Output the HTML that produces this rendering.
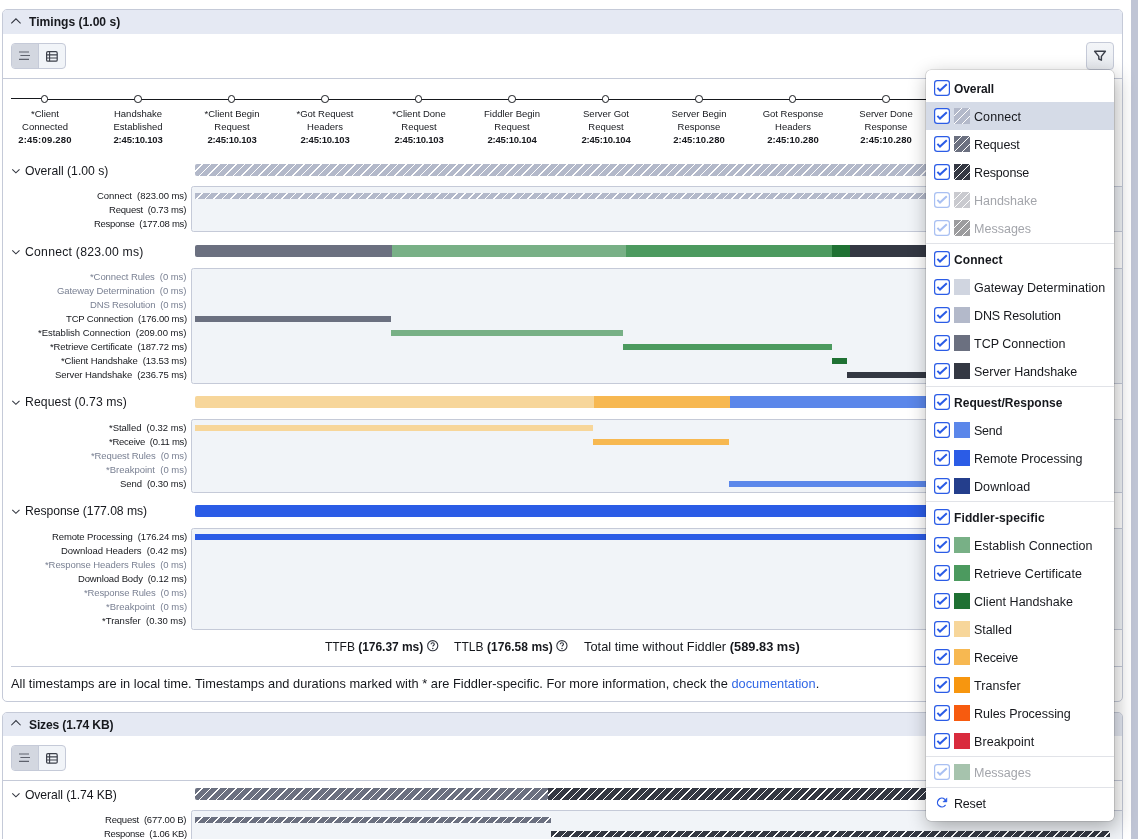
<!DOCTYPE html><html><head><meta charset="utf-8"><style>
html,body{margin:0;padding:0;}
body{width:1138px;height:839px;overflow:hidden;position:relative;background:#fff;font-family:"Liberation Sans", sans-serif;}
.t{position:absolute;white-space:nowrap;will-change:transform;}
.r{position:absolute;}
</style></head><body>
<div class="r" style="left:2px;top:9px;width:1119px;height:691px;border:1px solid #c5cad8;border-radius:5px;background:#fff;overflow:hidden"><div style="position:absolute;left:0;top:0;right:0;height:23.5px;background:#e5e9f3"></div></div>
<div class="t" style="left:28.8px;top:15.96px;font-size:12.1px;line-height:12.1px;font-weight:bold;color:#16181d;letter-spacing:0.001px;">Timings (1.00 s)</div>
<div class="r" style="left:11px;top:43px;width:53px;height:24px;border:1px solid #c5cad8;border-radius:4px;background:#f1f4f8;overflow:hidden"><div style="position:absolute;left:0;top:0;width:26px;height:24px;background:#d3d7e0;border-right:1px solid #c5cad8"></div></div>
<svg class="r" style="left:17px;top:49px" width="16" height="14" viewBox="0 0 16 14"><path d="M2 3H12 M3.4 6.5H13 M2 10.3H12" stroke="#5e626d" stroke-width="1.2" fill="none"/></svg>
<svg class="r" style="left:45px;top:49.6px" width="14" height="13" viewBox="0 0 14 13"><rect x="1.6" y="1.6" width="10.6" height="9.6" rx="1.3" fill="none" stroke="#3c404a" stroke-width="1.2"/><path d="M1.6 4.9H12.2 M1.6 8H12.2 M4.6 1.6V11.2" stroke="#3c404a" stroke-width="1.1" fill="none"/></svg>
<div class="r" style="left:1086.2px;top:42.1px;width:25.6px;height:25.6px;border:1px solid #c5cad8;border-radius:4px;background:linear-gradient(#f3f5f8,#e8ebf0)"></div>
<svg class="r" style="left:1092px;top:48px" width="16" height="15" viewBox="0 0 16 15"><path d="M2.6 3.2H13.4L9.4 8.4V12.2L6.8 11V8.4Z" fill="none" stroke="#3c404a" stroke-width="1.4" stroke-linejoin="round"/></svg>
<div class="r" style="left:3px;top:78px;width:1119px;height:1px;background:#c5cad8"></div>
<div class="r" style="left:11px;top:97.9px;width:33px;height:1.1px;background:#16181d"></div>
<div class="r" style="left:44px;top:98.8px;width:1070px;height:1.05px;background:#16181d"></div>
<div class="r" style="left:40.75px;top:95.25px;width:5.5px;height:5.5px;border:1px solid #16181d;border-radius:50%;background:#fff"></div>
<div class="t" style="left:-105.5px;width:300px;text-align:center;top:108.76px;font-size:9.5px;line-height:9.5px;font-weight:normal;color:#16181d;">*Client</div>
<div class="t" style="left:-105.5px;width:300px;text-align:center;top:121.76px;font-size:9.5px;line-height:9.5px;font-weight:normal;color:#16181d;">Connected</div>
<div class="t" style="left:-105.5px;width:300px;text-align:center;top:135.06px;font-size:9.5px;line-height:9.5px;font-weight:bold;color:#16181d;letter-spacing:0.206px;">2:45:09.280</div>
<div class="r" style="left:134.25px;top:95.25px;width:5.5px;height:5.5px;border:1px solid #16181d;border-radius:50%;background:#fff"></div>
<div class="t" style="left:-12.0px;width:300px;text-align:center;top:108.76px;font-size:9.5px;line-height:9.5px;font-weight:normal;color:#16181d;">Handshake</div>
<div class="t" style="left:-12.0px;width:300px;text-align:center;top:121.76px;font-size:9.5px;line-height:9.5px;font-weight:normal;color:#16181d;">Established</div>
<div class="t" style="left:-12.0px;width:300px;text-align:center;top:135.06px;font-size:9.5px;line-height:9.5px;font-weight:bold;color:#16181d;letter-spacing:-0.212px;">2:45:10.103</div>
<div class="r" style="left:227.75px;top:95.25px;width:5.5px;height:5.5px;border:1px solid #16181d;border-radius:50%;background:#fff"></div>
<div class="t" style="left:81.5px;width:300px;text-align:center;top:108.76px;font-size:9.5px;line-height:9.5px;font-weight:normal;color:#16181d;">*Client Begin</div>
<div class="t" style="left:81.5px;width:300px;text-align:center;top:121.76px;font-size:9.5px;line-height:9.5px;font-weight:normal;color:#16181d;">Request</div>
<div class="t" style="left:81.5px;width:300px;text-align:center;top:135.06px;font-size:9.5px;line-height:9.5px;font-weight:bold;color:#16181d;letter-spacing:-0.212px;">2:45:10.103</div>
<div class="r" style="left:321.25px;top:95.25px;width:5.5px;height:5.5px;border:1px solid #16181d;border-radius:50%;background:#fff"></div>
<div class="t" style="left:175.0px;width:300px;text-align:center;top:108.76px;font-size:9.5px;line-height:9.5px;font-weight:normal;color:#16181d;">*Got Request</div>
<div class="t" style="left:175.0px;width:300px;text-align:center;top:121.76px;font-size:9.5px;line-height:9.5px;font-weight:normal;color:#16181d;">Headers</div>
<div class="t" style="left:175.0px;width:300px;text-align:center;top:135.06px;font-size:9.5px;line-height:9.5px;font-weight:bold;color:#16181d;letter-spacing:-0.212px;">2:45:10.103</div>
<div class="r" style="left:414.75px;top:95.25px;width:5.5px;height:5.5px;border:1px solid #16181d;border-radius:50%;background:#fff"></div>
<div class="t" style="left:268.5px;width:300px;text-align:center;top:108.76px;font-size:9.5px;line-height:9.5px;font-weight:normal;color:#16181d;">*Client Done</div>
<div class="t" style="left:268.5px;width:300px;text-align:center;top:121.76px;font-size:9.5px;line-height:9.5px;font-weight:normal;color:#16181d;">Request</div>
<div class="t" style="left:268.5px;width:300px;text-align:center;top:135.06px;font-size:9.5px;line-height:9.5px;font-weight:bold;color:#16181d;letter-spacing:-0.212px;">2:45:10.103</div>
<div class="r" style="left:508.25px;top:95.25px;width:5.5px;height:5.5px;border:1px solid #16181d;border-radius:50%;background:#fff"></div>
<div class="t" style="left:362.0px;width:300px;text-align:center;top:108.76px;font-size:9.5px;line-height:9.5px;font-weight:normal;color:#16181d;">Fiddler Begin</div>
<div class="t" style="left:362.0px;width:300px;text-align:center;top:121.76px;font-size:9.5px;line-height:9.5px;font-weight:normal;color:#16181d;">Request</div>
<div class="t" style="left:362.0px;width:300px;text-align:center;top:135.06px;font-size:9.5px;line-height:9.5px;font-weight:bold;color:#16181d;letter-spacing:-0.203px;">2:45:10.104</div>
<div class="r" style="left:601.75px;top:95.25px;width:5.5px;height:5.5px;border:1px solid #16181d;border-radius:50%;background:#fff"></div>
<div class="t" style="left:455.5px;width:300px;text-align:center;top:108.76px;font-size:9.5px;line-height:9.5px;font-weight:normal;color:#16181d;">Server Got</div>
<div class="t" style="left:455.5px;width:300px;text-align:center;top:121.76px;font-size:9.5px;line-height:9.5px;font-weight:normal;color:#16181d;">Request</div>
<div class="t" style="left:455.5px;width:300px;text-align:center;top:135.06px;font-size:9.5px;line-height:9.5px;font-weight:bold;color:#16181d;letter-spacing:-0.203px;">2:45:10.104</div>
<div class="r" style="left:695.25px;top:95.25px;width:5.5px;height:5.5px;border:1px solid #16181d;border-radius:50%;background:#fff"></div>
<div class="t" style="left:549.0px;width:300px;text-align:center;top:108.76px;font-size:9.5px;line-height:9.5px;font-weight:normal;color:#16181d;">Server Begin</div>
<div class="t" style="left:549.0px;width:300px;text-align:center;top:121.76px;font-size:9.5px;line-height:9.5px;font-weight:normal;color:#16181d;">Response</div>
<div class="t" style="left:549.0px;width:300px;text-align:center;top:135.06px;font-size:9.5px;line-height:9.5px;font-weight:bold;color:#16181d;letter-spacing:0.033px;">2:45:10.280</div>
<div class="r" style="left:788.75px;top:95.25px;width:5.5px;height:5.5px;border:1px solid #16181d;border-radius:50%;background:#fff"></div>
<div class="t" style="left:642.5px;width:300px;text-align:center;top:108.76px;font-size:9.5px;line-height:9.5px;font-weight:normal;color:#16181d;">Got Response</div>
<div class="t" style="left:642.5px;width:300px;text-align:center;top:121.76px;font-size:9.5px;line-height:9.5px;font-weight:normal;color:#16181d;">Headers</div>
<div class="t" style="left:642.5px;width:300px;text-align:center;top:135.06px;font-size:9.5px;line-height:9.5px;font-weight:bold;color:#16181d;letter-spacing:0.033px;">2:45:10.280</div>
<div class="r" style="left:882.25px;top:95.25px;width:5.5px;height:5.5px;border:1px solid #16181d;border-radius:50%;background:#fff"></div>
<div class="t" style="left:736.0px;width:300px;text-align:center;top:108.76px;font-size:9.5px;line-height:9.5px;font-weight:normal;color:#16181d;">Server Done</div>
<div class="t" style="left:736.0px;width:300px;text-align:center;top:121.76px;font-size:9.5px;line-height:9.5px;font-weight:normal;color:#16181d;">Response</div>
<div class="t" style="left:736.0px;width:300px;text-align:center;top:135.06px;font-size:9.5px;line-height:9.5px;font-weight:bold;color:#16181d;letter-spacing:0.033px;">2:45:10.280</div>
<div class="r" style="left:975.75px;top:95.25px;width:5.5px;height:5.5px;border:1px solid #16181d;border-radius:50%;background:#fff"></div>
<div class="t" style="left:829.5px;width:300px;text-align:center;top:108.76px;font-size:9.5px;line-height:9.5px;font-weight:normal;color:#16181d;">Client Done</div>
<div class="t" style="left:829.5px;width:300px;text-align:center;top:121.76px;font-size:9.5px;line-height:9.5px;font-weight:normal;color:#16181d;">Response</div>
<div class="t" style="left:829.5px;width:300px;text-align:center;top:135.06px;font-size:9.5px;line-height:9.5px;font-weight:bold;color:#16181d;letter-spacing:0.033px;">2:45:10.280</div>
<div class="r" style="left:1069.25px;top:95.25px;width:5.5px;height:5.5px;border:1px solid #16181d;border-radius:50%;background:#fff"></div>
<div class="t" style="left:923.0px;width:300px;text-align:center;top:108.76px;font-size:9.5px;line-height:9.5px;font-weight:normal;color:#16181d;">Client</div>
<div class="t" style="left:923.0px;width:300px;text-align:center;top:121.76px;font-size:9.5px;line-height:9.5px;font-weight:normal;color:#16181d;">Disconnected</div>
<div class="t" style="left:923.0px;width:300px;text-align:center;top:135.06px;font-size:9.5px;line-height:9.5px;font-weight:bold;color:#16181d;letter-spacing:0.033px;">2:45:10.280</div>
<div class="t" style="left:25px;top:165.27px;font-size:12.2px;line-height:12.2px;font-weight:normal;color:#16181d;letter-spacing:0.005px;">Overall (1.00 s)</div>
<div class="r" style="left:195px;top:164px;width:915px;height:12px;border-radius:2px;background:repeating-linear-gradient(135deg,#b3b9ca 0 4.9px,#fff 4.9px 6px);"></div>
<div class="r" style="left:191px;top:186px;width:930px;height:44px;border:1px solid #c5cad8;border-radius:2.5px 0 0 2.5px;background:#f1f4f8"></div>
<div class="t" style="right:951.4px;text-align:right;top:191.16px;font-size:9.5px;line-height:9.5px;font-weight:normal;color:#16181d;letter-spacing:-0.063px;">Connect&nbsp;&nbsp;(823.00 ms)</div>
<div class="t" style="right:951.4px;text-align:right;top:205.16px;font-size:9.5px;line-height:9.5px;font-weight:normal;color:#16181d;letter-spacing:-0.200px;">Request&nbsp;&nbsp;(0.73 ms)</div>
<div class="t" style="right:951.4px;text-align:right;top:219.16px;font-size:9.5px;line-height:9.5px;font-weight:normal;color:#16181d;letter-spacing:-0.279px;">Response&nbsp;&nbsp;(177.08 ms)</div>
<div class="r" style="left:195px;top:193px;width:915px;height:6px;background:repeating-linear-gradient(135deg,#b3b9ca 0 4.9px,#fff 4.9px 6px);"></div>
<div class="t" style="left:25px;top:245.87px;font-size:12.2px;line-height:12.2px;font-weight:normal;color:#16181d;letter-spacing:0.257px;">Connect (823.00 ms)</div>
<div class="r" style="left:195px;top:245px;width:197px;height:12px;background:#6b7080;border-radius:2px 0 0 2px"></div>
<div class="r" style="left:392px;top:245px;width:234px;height:12px;background:#78b086;"></div>
<div class="r" style="left:626px;top:245px;width:206px;height:12px;background:#4c9a5f;"></div>
<div class="r" style="left:832px;top:245px;width:18px;height:12px;background:#1f7133;"></div>
<div class="r" style="left:850px;top:245px;width:260px;height:12px;background:#343843;"></div>
<div class="r" style="left:191px;top:268px;width:930px;height:114px;border:1px solid #c5cad8;border-radius:2.5px 0 0 2.5px;background:#f1f4f8"></div>
<div class="t" style="right:951.4px;text-align:right;top:272.16px;font-size:9.5px;line-height:9.5px;font-weight:normal;color:#7a8193;letter-spacing:-0.091px;">*Connect Rules&nbsp;&nbsp;(0 ms)</div>
<div class="t" style="right:951.4px;text-align:right;top:286.16px;font-size:9.5px;line-height:9.5px;font-weight:normal;color:#7a8193;letter-spacing:-0.075px;">Gateway Determination&nbsp;&nbsp;(0 ms)</div>
<div class="t" style="right:951.4px;text-align:right;top:300.16px;font-size:9.5px;line-height:9.5px;font-weight:normal;color:#7a8193;letter-spacing:-0.163px;">DNS Resolution&nbsp;&nbsp;(0 ms)</div>
<div class="t" style="right:951.4px;text-align:right;top:314.16px;font-size:9.5px;line-height:9.5px;font-weight:normal;color:#16181d;letter-spacing:-0.170px;">TCP Connection&nbsp;&nbsp;(176.00 ms)</div>
<div class="t" style="right:951.4px;text-align:right;top:328.16px;font-size:9.5px;line-height:9.5px;font-weight:normal;color:#16181d;letter-spacing:-0.018px;">*Establish Connection&nbsp;&nbsp;(209.00 ms)</div>
<div class="t" style="right:951.4px;text-align:right;top:342.16px;font-size:9.5px;line-height:9.5px;font-weight:normal;color:#16181d;letter-spacing:-0.102px;">*Retrieve Certificate&nbsp;&nbsp;(187.72 ms)</div>
<div class="t" style="right:951.4px;text-align:right;top:356.16px;font-size:9.5px;line-height:9.5px;font-weight:normal;color:#16181d;letter-spacing:-0.123px;">*Client Handshake&nbsp;&nbsp;(13.53 ms)</div>
<div class="t" style="right:951.4px;text-align:right;top:370.16px;font-size:9.5px;line-height:9.5px;font-weight:normal;color:#16181d;letter-spacing:-0.098px;">Server Handshake&nbsp;&nbsp;(236.75 ms)</div>
<div class="r" style="left:195px;top:316px;width:196px;height:6px;background:#6b7080"></div>
<div class="r" style="left:391px;top:330px;width:232px;height:6px;background:#78b086"></div>
<div class="r" style="left:623px;top:344px;width:209px;height:6px;background:#4c9a5f"></div>
<div class="r" style="left:832px;top:358px;width:15px;height:6px;background:#1f7133"></div>
<div class="r" style="left:847px;top:372px;width:263px;height:6px;background:#343843"></div>
<div class="t" style="left:25px;top:396.27px;font-size:12.2px;line-height:12.2px;font-weight:normal;color:#16181d;letter-spacing:0.097px;">Request (0.73 ms)</div>
<div class="r" style="left:195px;top:396px;width:399px;height:12px;background:#f7d69a;border-radius:2px 0 0 2px"></div>
<div class="r" style="left:594px;top:396px;width:136px;height:12px;background:#f7b851;"></div>
<div class="r" style="left:730px;top:396px;width:380px;height:12px;background:#5b87ea;"></div>
<div class="r" style="left:191px;top:418.5px;width:930px;height:72px;border:1px solid #c5cad8;border-radius:2.5px 0 0 2.5px;background:#f1f4f8"></div>
<div class="t" style="right:951.4px;text-align:right;top:423.16px;font-size:9.5px;line-height:9.5px;font-weight:normal;color:#16181d;letter-spacing:-0.040px;">*Stalled&nbsp;&nbsp;(0.32 ms)</div>
<div class="t" style="right:951.4px;text-align:right;top:437.16px;font-size:9.5px;line-height:9.5px;font-weight:normal;color:#16181d;letter-spacing:-0.248px;">*Receive&nbsp;&nbsp;(0.11 ms)</div>
<div class="t" style="right:951.4px;text-align:right;top:451.16px;font-size:9.5px;line-height:9.5px;font-weight:normal;color:#7a8193;letter-spacing:-0.100px;">*Request Rules&nbsp;&nbsp;(0 ms)</div>
<div class="t" style="right:951.4px;text-align:right;top:465.16px;font-size:9.5px;line-height:9.5px;font-weight:normal;color:#7a8193;letter-spacing:-0.011px;">*Breakpoint&nbsp;&nbsp;(0 ms)</div>
<div class="t" style="right:951.4px;text-align:right;top:479.16px;font-size:9.5px;line-height:9.5px;font-weight:normal;color:#16181d;letter-spacing:-0.086px;">Send&nbsp;&nbsp;(0.30 ms)</div>
<div class="r" style="left:195px;top:425px;width:398px;height:6px;background:#f7d69a"></div>
<div class="r" style="left:593px;top:439px;width:136px;height:6px;background:#f7b851"></div>
<div class="r" style="left:729px;top:481px;width:381px;height:6px;background:#5b87ea"></div>
<div class="t" style="left:25px;top:505.27px;font-size:12.2px;line-height:12.2px;font-weight:normal;color:#16181d;letter-spacing:-0.065px;">Response (177.08 ms)</div>
<div class="r" style="left:195px;top:505px;width:915px;height:12px;background:#2b5ce6;border-radius:2px"></div>
<div class="r" style="left:191px;top:527.5px;width:930px;height:100px;border:1px solid #c5cad8;border-radius:2.5px 0 0 2.5px;background:#f1f4f8"></div>
<div class="t" style="right:951.4px;text-align:right;top:532.16px;font-size:9.5px;line-height:9.5px;font-weight:normal;color:#16181d;letter-spacing:-0.126px;">Remote Processing&nbsp;&nbsp;(176.24 ms)</div>
<div class="t" style="right:951.4px;text-align:right;top:546.16px;font-size:9.5px;line-height:9.5px;font-weight:normal;color:#16181d;letter-spacing:-0.015px;">Download Headers&nbsp;&nbsp;(0.42 ms)</div>
<div class="t" style="right:951.4px;text-align:right;top:560.16px;font-size:9.5px;line-height:9.5px;font-weight:normal;color:#7a8193;letter-spacing:-0.082px;">*Response Headers Rules&nbsp;&nbsp;(0 ms)</div>
<div class="t" style="right:951.4px;text-align:right;top:574.16px;font-size:9.5px;line-height:9.5px;font-weight:normal;color:#16181d;letter-spacing:-0.136px;">Download Body&nbsp;&nbsp;(0.12 ms)</div>
<div class="t" style="right:951.4px;text-align:right;top:588.16px;font-size:9.5px;line-height:9.5px;font-weight:normal;color:#7a8193;letter-spacing:-0.122px;">*Response Rules&nbsp;&nbsp;(0 ms)</div>
<div class="t" style="right:951.4px;text-align:right;top:602.16px;font-size:9.5px;line-height:9.5px;font-weight:normal;color:#7a8193;letter-spacing:-0.011px;">*Breakpoint&nbsp;&nbsp;(0 ms)</div>
<div class="t" style="right:951.4px;text-align:right;top:616.16px;font-size:9.5px;line-height:9.5px;font-weight:normal;color:#16181d;letter-spacing:0.004px;">*Transfer&nbsp;&nbsp;(0.30 ms)</div>
<div class="r" style="left:195px;top:534px;width:915px;height:6px;background:#2b5ce6"></div>
<div class="t" style="left:325.3px;top:641.44px;font-size:12px;line-height:12px;font-weight:normal;color:#16181d;letter-spacing:-0.031px;">TTFB <b>(176.37 ms)</b></div>
<div class="t" style="left:454.4px;top:641.44px;font-size:12px;line-height:12px;font-weight:normal;color:#16181d;letter-spacing:0.053px;">TTLB <b>(176.58 ms)</b></div>
<div class="t" style="left:583.5px;top:640.76px;font-size:12.8px;line-height:12.8px;font-weight:normal;color:#16181d;letter-spacing:0.023px;">Total time without Fiddler <b>(589.83 ms)</b></div>
<div class="r" style="left:11px;top:666px;width:1112px;height:1px;background:#c5cad8"></div>
<div class="t" style="left:11.4px;top:677.56px;font-size:12.8px;line-height:12.8px;font-weight:normal;color:#16181d;letter-spacing:0.022px;">All timestamps are in local time. Timestamps and durations marked with * are Fiddler-specific. For more information, check the <span style="color:#3268e6">documentation</span>.</div>
<div class="r" style="left:2px;top:712px;width:1119px;height:286px;border:1px solid #c5cad8;border-radius:5px;background:#fff;overflow:hidden"><div style="position:absolute;left:0;top:0;right:0;height:22.8px;background:#e5e9f3"></div></div>
<div class="t" style="left:28.8px;top:718.96px;font-size:12.1px;line-height:12.1px;font-weight:bold;color:#16181d;letter-spacing:-0.155px;">Sizes (1.74 KB)</div>
<div class="r" style="left:11px;top:745px;width:53px;height:24px;border:1px solid #c5cad8;border-radius:4px;background:#f1f4f8;overflow:hidden"><div style="position:absolute;left:0;top:0;width:26px;height:24px;background:#d3d7e0;border-right:1px solid #c5cad8"></div></div>
<svg class="r" style="left:17px;top:751px" width="16" height="14" viewBox="0 0 16 14"><path d="M2 3H12 M3.4 6.5H13 M2 10.3H12" stroke="#5e626d" stroke-width="1.2" fill="none"/></svg>
<svg class="r" style="left:45px;top:751.6px" width="14" height="13" viewBox="0 0 14 13"><rect x="1.6" y="1.6" width="10.6" height="9.6" rx="1.3" fill="none" stroke="#3c404a" stroke-width="1.2"/><path d="M1.6 4.9H12.2 M1.6 8H12.2 M4.6 1.6V11.2" stroke="#3c404a" stroke-width="1.1" fill="none"/></svg>
<div class="r" style="left:3px;top:780px;width:1119px;height:1px;background:#c5cad8"></div>
<div class="t" style="left:25px;top:789.07px;font-size:12.2px;line-height:12.2px;font-weight:normal;color:#16181d;letter-spacing:-0.105px;">Overall (1.74 KB)</div>
<div class="r" style="left:195px;top:788px;width:353px;height:12px;border-radius:2px 0 0 2px;background:repeating-linear-gradient(135deg,#6b7080 0 4.9px,#fff 4.9px 6px);"></div>
<div class="r" style="left:548px;top:788px;width:562px;height:12px;background:repeating-linear-gradient(135deg,#343843 0 4.9px,#fff 4.9px 6px);"></div>
<div class="r" style="left:191px;top:810px;width:930px;height:44px;border:1px solid #c5cad8;border-radius:2.5px 0 0 2.5px;background:#f1f4f8"></div>
<div class="t" style="right:951.4px;text-align:right;top:815.16px;font-size:9.5px;line-height:9.5px;font-weight:normal;color:#16181d;letter-spacing:-0.196px;">Request&nbsp;&nbsp;(677.00 B)</div>
<div class="t" style="right:951.4px;text-align:right;top:829.16px;font-size:9.5px;line-height:9.5px;font-weight:normal;color:#16181d;letter-spacing:-0.273px;">Response&nbsp;&nbsp;(1.06 KB)</div>
<div class="r" style="left:195px;top:817px;width:356px;height:6px;background:repeating-linear-gradient(135deg,#6b7080 0 4.9px,#fff 4.9px 6px);"></div>
<div class="r" style="left:551px;top:831px;width:559px;height:6px;background:repeating-linear-gradient(135deg,#343843 0 4.9px,#fff 4.9px 6px);"></div>
<div class="r" style="left:1131px;top:0px;width:7px;height:839px;background:#c0c5d5"></div>
<svg class="r" style="left:0;top:0" width="1138" height="839" viewBox="0 0 1138 839"><path d="M11.3 23.45 L15.95 18.8 L20.6 23.45" fill="none" stroke="#30343e" stroke-width="1.05"/><path d="M12.3 169.4 L15.9 172.8 L19.5 169.4" fill="none" stroke="#30343e" stroke-width="1.05"/><path d="M12.3 250.4 L15.9 253.8 L19.5 250.4" fill="none" stroke="#30343e" stroke-width="1.05"/><path d="M12.3 400.9 L15.9 404.29999999999995 L19.5 400.9" fill="none" stroke="#30343e" stroke-width="1.05"/><path d="M12.3 509.9 L15.9 513.3 L19.5 509.9" fill="none" stroke="#30343e" stroke-width="1.05"/><g transform="translate(426.7 639.7)"><circle cx="6" cy="6" r="5.1" fill="none" stroke="#30343e" stroke-width="1.1"/><path d="M4.4 4.6C4.4 3.7 5.1 3.1 6 3.1C6.9 3.1 7.6 3.7 7.6 4.5C7.6 5.5 6.2 5.6 6.2 6.8" fill="none" stroke="#30343e" stroke-width="1.1"/><circle cx="6.1" cy="8.7" r="0.75" fill="#30343e"/></g><g transform="translate(555.9 639.7)"><circle cx="6" cy="6" r="5.1" fill="none" stroke="#30343e" stroke-width="1.1"/><path d="M4.4 4.6C4.4 3.7 5.1 3.1 6 3.1C6.9 3.1 7.6 3.7 7.6 4.5C7.6 5.5 6.2 5.6 6.2 6.8" fill="none" stroke="#30343e" stroke-width="1.1"/><circle cx="6.1" cy="8.7" r="0.75" fill="#30343e"/></g><path d="M11.3 725.25 L15.95 720.5999999999999 L20.6 725.25" fill="none" stroke="#30343e" stroke-width="1.05"/><path d="M12.3 793.4 L15.9 796.8 L19.5 793.4" fill="none" stroke="#30343e" stroke-width="1.05"/></svg>
<div class="r" style="left:926px;top:70px;width:188px;height:751px;background:#fff;border-radius:5px;box-shadow:2px 6px 20px rgba(0,0,0,0.32),0 0 0 0.6px rgba(0,0,0,0.2)"></div>
<div class="t" style="left:954px;top:82.84px;font-size:12px;line-height:12px;font-weight:bold;color:#16181d;letter-spacing:-0.100px;">Overall</div>
<div class="r" style="left:926px;top:102px;width:188px;height:28px;background:#d5dbe7"></div>
<div class="r" style="left:954px;top:108px;width:16px;height:16px;background:repeating-linear-gradient(135deg,#fff 0 0.65px,#b3b9ca 0.65px 5.007px,#fff 5.007px 5.657px);"></div>
<div class="t" style="left:974px;top:110.52px;font-size:12.5px;line-height:12.5px;font-weight:normal;color:#16181d;letter-spacing:0.077px;">Connect</div>
<div class="r" style="left:954px;top:136px;width:16px;height:16px;background:repeating-linear-gradient(135deg,#fff 0 0.65px,#6b7080 0.65px 5.007px,#fff 5.007px 5.657px);"></div>
<div class="t" style="left:974px;top:138.52px;font-size:12.5px;line-height:12.5px;font-weight:normal;color:#16181d;letter-spacing:-0.123px;">Request</div>
<div class="r" style="left:954px;top:164px;width:16px;height:16px;background:repeating-linear-gradient(135deg,#fff 0 0.65px,#343843 0.65px 5.007px,#fff 5.007px 5.657px);"></div>
<div class="t" style="left:974px;top:166.52px;font-size:12.5px;line-height:12.5px;font-weight:normal;color:#16181d;letter-spacing:-0.150px;">Response</div>
<div class="r" style="left:954px;top:192px;width:16px;height:16px;background:repeating-linear-gradient(135deg,#fff 0 0.65px,#c9cacf 0.65px 5.007px,#fff 5.007px 5.657px);"></div>
<div class="t" style="left:974px;top:194.52px;font-size:12.5px;line-height:12.5px;font-weight:normal;color:#a3a5ab;letter-spacing:-0.017px;">Handshake</div>
<div class="r" style="left:954px;top:220px;width:16px;height:16px;background:repeating-linear-gradient(135deg,#fff 0 0.65px,#9c9c9e 0.65px 5.007px,#fff 5.007px 5.657px);"></div>
<div class="t" style="left:974px;top:222.52px;font-size:12.5px;line-height:12.5px;font-weight:normal;color:#a3a5ab;letter-spacing:0.014px;">Messages</div>
<div class="r" style="left:926px;top:243px;width:188px;height:1px;background:#e1e3e8"></div>
<div class="t" style="left:954px;top:253.84px;font-size:12px;line-height:12px;font-weight:bold;color:#16181d;letter-spacing:0.086px;">Connect</div>
<div class="r" style="left:954px;top:279px;width:16px;height:16px;background:#d0d5e0"></div>
<div class="t" style="left:974px;top:281.52px;font-size:12.5px;line-height:12.5px;font-weight:normal;color:#16181d;letter-spacing:0.027px;">Gateway Determination</div>
<div class="r" style="left:954px;top:307px;width:16px;height:16px;background:#b3b9ca"></div>
<div class="t" style="left:974px;top:309.52px;font-size:12.5px;line-height:12.5px;font-weight:normal;color:#16181d;letter-spacing:-0.146px;">DNS Resolution</div>
<div class="r" style="left:954px;top:335px;width:16px;height:16px;background:#6b7080"></div>
<div class="t" style="left:974px;top:337.52px;font-size:12.5px;line-height:12.5px;font-weight:normal;color:#16181d;letter-spacing:-0.007px;">TCP Connection</div>
<div class="r" style="left:954px;top:363px;width:16px;height:16px;background:#343843"></div>
<div class="t" style="left:974px;top:365.52px;font-size:12.5px;line-height:12.5px;font-weight:normal;color:#16181d;letter-spacing:-0.021px;">Server Handshake</div>
<div class="r" style="left:926px;top:386px;width:188px;height:1px;background:#e1e3e8"></div>
<div class="t" style="left:954px;top:396.84px;font-size:12px;line-height:12px;font-weight:bold;color:#16181d;letter-spacing:0.023px;">Request/Response</div>
<div class="r" style="left:954px;top:422px;width:16px;height:16px;background:#5b87ea"></div>
<div class="t" style="left:974px;top:424.52px;font-size:12.5px;line-height:12.5px;font-weight:normal;color:#16181d;letter-spacing:-0.251px;">Send</div>
<div class="r" style="left:954px;top:450px;width:16px;height:16px;background:#2b5ce6"></div>
<div class="t" style="left:974px;top:452.52px;font-size:12.5px;line-height:12.5px;font-weight:normal;color:#16181d;letter-spacing:-0.040px;">Remote Processing</div>
<div class="r" style="left:954px;top:478px;width:16px;height:16px;background:#243e8c"></div>
<div class="t" style="left:974px;top:480.52px;font-size:12.5px;line-height:12.5px;font-weight:normal;color:#16181d;letter-spacing:0.076px;">Download</div>
<div class="r" style="left:926px;top:501px;width:188px;height:1px;background:#e1e3e8"></div>
<div class="t" style="left:954px;top:511.84px;font-size:12px;line-height:12px;font-weight:bold;color:#16181d;letter-spacing:0.126px;">Fiddler-specific</div>
<div class="r" style="left:954px;top:537px;width:16px;height:16px;background:#78b086"></div>
<div class="t" style="left:974px;top:539.52px;font-size:12.5px;line-height:12.5px;font-weight:normal;color:#16181d;letter-spacing:0.058px;">Establish Connection</div>
<div class="r" style="left:954px;top:565px;width:16px;height:16px;background:#4c9a5f"></div>
<div class="t" style="left:974px;top:567.52px;font-size:12.5px;line-height:12.5px;font-weight:normal;color:#16181d;letter-spacing:0.085px;">Retrieve Certificate</div>
<div class="r" style="left:954px;top:593px;width:16px;height:16px;background:#1f7133"></div>
<div class="t" style="left:974px;top:595.52px;font-size:12.5px;line-height:12.5px;font-weight:normal;color:#16181d;letter-spacing:0.021px;">Client Handshake</div>
<div class="r" style="left:954px;top:621px;width:16px;height:16px;background:#f7d69a"></div>
<div class="t" style="left:974px;top:623.52px;font-size:12.5px;line-height:12.5px;font-weight:normal;color:#16181d;letter-spacing:-0.062px;">Stalled</div>
<div class="r" style="left:954px;top:649px;width:16px;height:16px;background:#f7b851"></div>
<div class="t" style="left:974px;top:651.52px;font-size:12.5px;line-height:12.5px;font-weight:normal;color:#16181d;letter-spacing:-0.139px;">Receive</div>
<div class="r" style="left:954px;top:677px;width:16px;height:16px;background:#f7960f"></div>
<div class="t" style="left:974px;top:679.52px;font-size:12.5px;line-height:12.5px;font-weight:normal;color:#16181d;letter-spacing:0.090px;">Transfer</div>
<div class="r" style="left:954px;top:705px;width:16px;height:16px;background:#f75b0f"></div>
<div class="t" style="left:974px;top:707.52px;font-size:12.5px;line-height:12.5px;font-weight:normal;color:#16181d;letter-spacing:-0.035px;">Rules Processing</div>
<div class="r" style="left:954px;top:733px;width:16px;height:16px;background:#d92b3d"></div>
<div class="t" style="left:974px;top:735.52px;font-size:12.5px;line-height:12.5px;font-weight:normal;color:#16181d;letter-spacing:0.063px;">Breakpoint</div>
<div class="r" style="left:926px;top:756px;width:188px;height:1px;background:#e1e3e8"></div>
<div class="r" style="left:954px;top:764px;width:16px;height:16px;background:#a6c3ad"></div>
<div class="t" style="left:974px;top:766.52px;font-size:12.5px;line-height:12.5px;font-weight:normal;color:#a3a5ab;letter-spacing:0.002px;">Messages</div>
<div class="r" style="left:926px;top:787px;width:188px;height:1px;background:#e1e3e8"></div>
<div class="t" style="left:954px;top:797.52px;font-size:12.5px;line-height:12.5px;font-weight:normal;color:#16181d;letter-spacing:-0.191px;">Reset</div>
<svg class="r" style="left:0;top:0" width="1138" height="839" viewBox="0 0 1138 839"><rect x="934.6" y="80.6" width="14.8" height="14.8" rx="2.6" fill="#fff" stroke="#2b5ce6" stroke-width="1.2"/><path d="M937.4 87.9L940 90.6L946.8 84.2" fill="none" stroke="#2b5ce6" stroke-width="2"/><rect x="934.6" y="108.6" width="14.8" height="14.8" rx="2.6" fill="#fff" stroke="#2b5ce6" stroke-width="1.2"/><path d="M937.4 115.9L940 118.6L946.8 112.2" fill="none" stroke="#2b5ce6" stroke-width="2"/><rect x="934.6" y="136.6" width="14.8" height="14.8" rx="2.6" fill="#fff" stroke="#2b5ce6" stroke-width="1.2"/><path d="M937.4 143.9L940 146.6L946.8 140.2" fill="none" stroke="#2b5ce6" stroke-width="2"/><rect x="934.6" y="164.6" width="14.8" height="14.8" rx="2.6" fill="#fff" stroke="#2b5ce6" stroke-width="1.2"/><path d="M937.4 171.9L940 174.6L946.8 168.2" fill="none" stroke="#2b5ce6" stroke-width="2"/><rect x="934.6" y="192.6" width="14.8" height="14.8" rx="2.6" fill="#fff" stroke="#a9c0f2" stroke-width="1.2"/><path d="M937.4 199.9L940 202.6L946.8 196.2" fill="none" stroke="#a9c0f2" stroke-width="2"/><rect x="934.6" y="220.6" width="14.8" height="14.8" rx="2.6" fill="#fff" stroke="#a9c0f2" stroke-width="1.2"/><path d="M937.4 227.9L940 230.6L946.8 224.2" fill="none" stroke="#a9c0f2" stroke-width="2"/><rect x="934.6" y="251.6" width="14.8" height="14.8" rx="2.6" fill="#fff" stroke="#2b5ce6" stroke-width="1.2"/><path d="M937.4 258.9L940 261.6L946.8 255.2" fill="none" stroke="#2b5ce6" stroke-width="2"/><rect x="934.6" y="279.6" width="14.8" height="14.8" rx="2.6" fill="#fff" stroke="#2b5ce6" stroke-width="1.2"/><path d="M937.4 286.9L940 289.6L946.8 283.2" fill="none" stroke="#2b5ce6" stroke-width="2"/><rect x="934.6" y="307.6" width="14.8" height="14.8" rx="2.6" fill="#fff" stroke="#2b5ce6" stroke-width="1.2"/><path d="M937.4 314.9L940 317.6L946.8 311.2" fill="none" stroke="#2b5ce6" stroke-width="2"/><rect x="934.6" y="335.6" width="14.8" height="14.8" rx="2.6" fill="#fff" stroke="#2b5ce6" stroke-width="1.2"/><path d="M937.4 342.9L940 345.6L946.8 339.2" fill="none" stroke="#2b5ce6" stroke-width="2"/><rect x="934.6" y="363.6" width="14.8" height="14.8" rx="2.6" fill="#fff" stroke="#2b5ce6" stroke-width="1.2"/><path d="M937.4 370.9L940 373.6L946.8 367.2" fill="none" stroke="#2b5ce6" stroke-width="2"/><rect x="934.6" y="394.6" width="14.8" height="14.8" rx="2.6" fill="#fff" stroke="#2b5ce6" stroke-width="1.2"/><path d="M937.4 401.9L940 404.6L946.8 398.2" fill="none" stroke="#2b5ce6" stroke-width="2"/><rect x="934.6" y="422.6" width="14.8" height="14.8" rx="2.6" fill="#fff" stroke="#2b5ce6" stroke-width="1.2"/><path d="M937.4 429.9L940 432.6L946.8 426.2" fill="none" stroke="#2b5ce6" stroke-width="2"/><rect x="934.6" y="450.6" width="14.8" height="14.8" rx="2.6" fill="#fff" stroke="#2b5ce6" stroke-width="1.2"/><path d="M937.4 457.9L940 460.6L946.8 454.2" fill="none" stroke="#2b5ce6" stroke-width="2"/><rect x="934.6" y="478.6" width="14.8" height="14.8" rx="2.6" fill="#fff" stroke="#2b5ce6" stroke-width="1.2"/><path d="M937.4 485.9L940 488.6L946.8 482.2" fill="none" stroke="#2b5ce6" stroke-width="2"/><rect x="934.6" y="509.6" width="14.8" height="14.8" rx="2.6" fill="#fff" stroke="#2b5ce6" stroke-width="1.2"/><path d="M937.4 516.9L940 519.6L946.8 513.2" fill="none" stroke="#2b5ce6" stroke-width="2"/><rect x="934.6" y="537.6" width="14.8" height="14.8" rx="2.6" fill="#fff" stroke="#2b5ce6" stroke-width="1.2"/><path d="M937.4 544.9L940 547.6L946.8 541.2" fill="none" stroke="#2b5ce6" stroke-width="2"/><rect x="934.6" y="565.6" width="14.8" height="14.8" rx="2.6" fill="#fff" stroke="#2b5ce6" stroke-width="1.2"/><path d="M937.4 572.9L940 575.6L946.8 569.2" fill="none" stroke="#2b5ce6" stroke-width="2"/><rect x="934.6" y="593.6" width="14.8" height="14.8" rx="2.6" fill="#fff" stroke="#2b5ce6" stroke-width="1.2"/><path d="M937.4 600.9L940 603.6L946.8 597.2" fill="none" stroke="#2b5ce6" stroke-width="2"/><rect x="934.6" y="621.6" width="14.8" height="14.8" rx="2.6" fill="#fff" stroke="#2b5ce6" stroke-width="1.2"/><path d="M937.4 628.9L940 631.6L946.8 625.2" fill="none" stroke="#2b5ce6" stroke-width="2"/><rect x="934.6" y="649.6" width="14.8" height="14.8" rx="2.6" fill="#fff" stroke="#2b5ce6" stroke-width="1.2"/><path d="M937.4 656.9L940 659.6L946.8 653.2" fill="none" stroke="#2b5ce6" stroke-width="2"/><rect x="934.6" y="677.6" width="14.8" height="14.8" rx="2.6" fill="#fff" stroke="#2b5ce6" stroke-width="1.2"/><path d="M937.4 684.9L940 687.6L946.8 681.2" fill="none" stroke="#2b5ce6" stroke-width="2"/><rect x="934.6" y="705.6" width="14.8" height="14.8" rx="2.6" fill="#fff" stroke="#2b5ce6" stroke-width="1.2"/><path d="M937.4 712.9L940 715.6L946.8 709.2" fill="none" stroke="#2b5ce6" stroke-width="2"/><rect x="934.6" y="733.6" width="14.8" height="14.8" rx="2.6" fill="#fff" stroke="#2b5ce6" stroke-width="1.2"/><path d="M937.4 740.9L940 743.6L946.8 737.2" fill="none" stroke="#2b5ce6" stroke-width="2"/><rect x="934.6" y="764.6" width="14.8" height="14.8" rx="2.6" fill="#fff" stroke="#a9c0f2" stroke-width="1.2"/><path d="M937.4 771.9L940 774.6L946.8 768.2" fill="none" stroke="#a9c0f2" stroke-width="2"/><g transform="translate(0 0)"><path d="M944.65 799.2A4.35 4.35 0 1 0 945.18 805.35" fill="none" stroke="#2b5ce6" stroke-width="1.3" stroke-linecap="round"/><path d="M946.9 797.9V801.9H942.9Z" fill="#2b5ce6" stroke="#2b5ce6" stroke-width="0.5" stroke-linejoin="round"/></g></svg>
</body></html>
